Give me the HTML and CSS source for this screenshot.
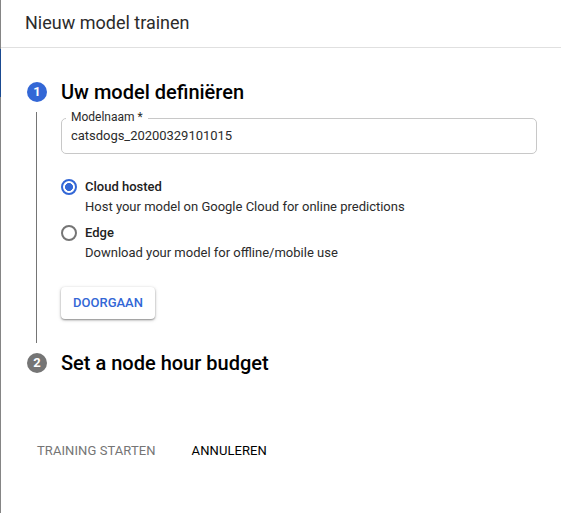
FILE: index.html
```html
<!DOCTYPE html>
<html lang="nl">
<head>
<meta charset="utf-8">
<title>Nieuw model trainen</title>
<link rel="stylesheet" href="styles.css">
</head>
<body>
<div class="backdrop"></div>
<main class="panel">
  <header class="header"><h1>Nieuw model trainen</h1></header>
  <section class="step">
    <div class="rail"><span class="badge">1</span><span class="line"></span></div>
    <div class="content">
      <h2>Uw model definiëren</h2>
      <fieldset class="field">
        <legend>Modelnaam *</legend>
        <span class="value">catsdogs_20200329101015</span>
      </fieldset>
      <div class="options">
        <label class="option">
          <span class="radio checked"></span>
          <span class="text"><b>Cloud hosted</b><span class="hint">Host your model on Google Cloud for online predictions</span></span>
        </label>
        <label class="option">
          <span class="radio"></span>
          <span class="text"><b>Edge</b><span class="hint">Download your model for offline/mobile use</span></span>
        </label>
      </div>
      <button class="continue">DOORGAAN</button>
    </div>
  </section>
  <section class="step step-next">
    <div class="rail"><span class="badge muted">2</span></div>
    <div class="content"><h2>Set a node hour budget</h2></div>
  </section>
  <footer class="actions">
    <span class="start">TRAINING STARTEN</span>
    <span class="cancel">ANNULEREN</span>
  </footer>
</main>
</body>
</html>
```
FILE: styles.css
```css
* { box-sizing: border-box; }
body {
  margin: 0;
  height: 513px;
  display: flex;
  overflow: hidden;
  background: #fff;
  color: #2b2b2b;
  font: 13px/20px Roboto, sans-serif;
  white-space: nowrap;
}
.backdrop {
  width: 1px;
  background: linear-gradient(#858585 49px, #1a4a91 49px 97px, #858585 97px);
}
.panel { flex: 1; }
.header {
  height: 48px;
  padding: 11px 0 0 24px;
  border-bottom: 1px solid #e0e0e0;
}
h1 { margin: 0; font-size: 18px; line-height: 24px; font-weight: 400; }
.step { display: flex; height: 261px; margin: 34px 24px 0 26px; }
.rail { width: 20px; margin-right: 14px; display: flex; flex-direction: column; align-items: center; }
.badge {
  flex: none;
  width: 20px;
  height: 20px;
  border-radius: 50%;
  background: #3367d6;
  color: #fff;
  font-size: 13px;
  font-weight: 700;
  text-align: center;
}
.muted { background: #757575; }
.line { width: 1px; height: 231px; margin: 10px 1px 0 0; background: #757575; }
.content { flex: 1; }
h2 { margin: 0; font-size: 20px; line-height: 20px; font-weight: 500; color: #000; }
.field {
  margin: 8px 0 0;
  min-width: 0;
  height: 44px;
  padding: 0 9px;
  border: 1px solid #c8c8c8;
  border-radius: 5px;
  width: 476px;
}
legend { height: 16px; margin-left: -5px; padding: 0 5px; font-size: 12px; line-height: 14px; }
.value { display: block; line-height: 20px; letter-spacing: -0.03px; }
.options { margin-top: 23px; }
.option { display: flex; height: 46px; }
.radio {
  width: 16px;
  height: 16px;
  margin: 2px 8px 0 0;
  border: 2px solid #757575;
  border-radius: 50%;
}
.checked { border-color: #3367d6; background: radial-gradient(circle, #3367d6 3.7px, #fff 4.3px); }
.text b, .hint { display: block; }
.text b { font-weight: 500; color: #212121; }
.continue {
  display: block;
  width: 94px;
  height: 32px;
  margin: 18px 0 0;
  padding: 0;
  border: 0;
  border-radius: 4px;
  background: #fff;
  color: #3367d6;
  font: 500 13px/32px Roboto, sans-serif;
  box-shadow: 0 1px 2px rgba(0,0,0,.4), 0 1px 4px rgba(0,0,0,.14);
}
.step-next { height: 20px; margin-top: 10px; }
.actions { display: flex; gap: 36px; margin: 68px 0 0 36px; letter-spacing: .08px; }
.start { color: #757575; }
.cancel { color: #000; }
```
